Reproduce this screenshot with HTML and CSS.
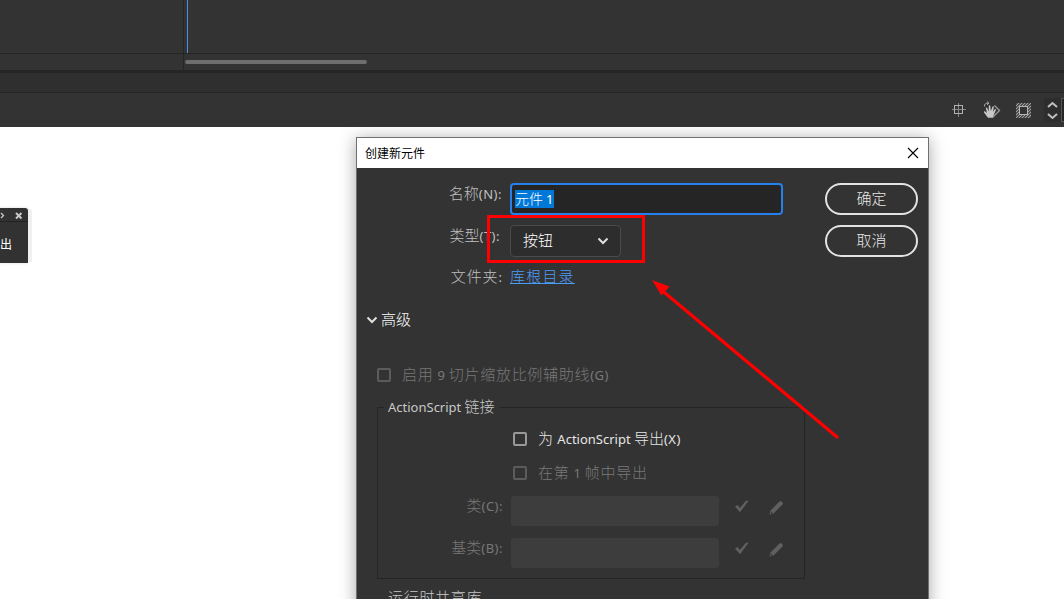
FILE: index.html
```html
<!DOCTYPE html>
<html lang="zh-CN">
<head>
    <meta charset="UTF-8">
    <meta name="viewport" content="width=device-width, initial-scale=1.0">
    <title>创建新元件</title>
    <link rel="stylesheet" href="styles.css">
</head>
<body>
    <div class="timeline">
        <div class="layers"></div>
        <div class="frames"><div class="playhead"></div></div>
    </div>
    <div class="timeline-scroll">
        <div class="layers"></div>
        <div class="track"><div class="thumb"></div></div>
    </div>
    <div class="tabs"></div>
    <div class="toolbar">
        <svg class="tool" width="14" height="14" viewBox="0 0 14 14" fill="none">
            <path d="M6.500 0v14M0 6.500h14" stroke="#858585"/>
            <rect x="2.500" y="2.500" width="8" height="8" stroke="#b0b0b0"/>
        </svg>
        <svg class="tool" width="18" height="18" viewBox="0 0 18 18">
            <path d="M1.500 5.500C1 3 3 2 5.500 2.200M4 .5l2 1.700-2 1.600" fill="none" stroke="#aaa"/>
            <path d="M11.500 4.500l5 5-6 6" fill="none" stroke="#999" stroke-width="1.400"/>
            <path d="M5 16.800L1 11.500c-.6-1 .5-1.700 1.200-1L4 12 2.800 7.300c-.2-1 1-1.200 1.400-.3L5.700 10.500 5.800 5c0-1 1.400-1 1.500 0L7.800 10 9.500 5.800c.3-.9 1.500-.5 1.300.4L9.900 11l1.800-2.700c.5-.8 1.500-.2 1.200.6L10.500 14.500v2.300z" fill="#c8c8c8"/>
        </svg>
        <svg class="tool" width="15" height="15" viewBox="0 0 15 15">
            <defs>
                <pattern id="hatch" width="3" height="3" patternUnits="userSpaceOnUse">
                    <rect width="3" height="3" fill="#505050"/>
                    <path d="M-1 1L1-1M0 3L3 0M2 4L4 2" stroke="#a0a0a0" stroke-width="1"/>
                </pattern>
            </defs>
            <rect width="15" height="15" fill="url(#hatch)"/>
            <rect x="3.500" y="3.500" width="8" height="8" fill="#333" stroke="#b5b5b5"/>
        </svg>
        <div class="stepper">
            <svg width="16" height="24" viewBox="0 0 16 24" fill="none" stroke="#c0c0c0" stroke-width="2">
                <path d="M4 9l4.500-4L13 9M4 16l4.500 4 4.500-4"/>
            </svg>
        </div>
        <div class="zoom-box"></div>
    </div>

    <div class="stage">
        <div class="mini-panel">
            <div class="mini-head">
                <svg width="28" height="13" viewBox="0 0 28 13" fill="none" stroke="#c8c8c8">
                    <path d="M1 5l2.500 2.500L1 10" stroke-width="1.300"/>
                    <path d="M16 5l5.500 5.500M21.500 5L16 10.500" stroke-width="2"/>
                </svg>
            </div>
            <div class="mini-body">导出</div>
        </div>

        <div class="dialog">
            <div class="titlebar">
                <span class="title">创建新元件</span>
                <svg width="12" height="12" viewBox="0 0 12 12" stroke="#000" stroke-width="1.100">
                    <path d="M1 1l10 10M11 1L1 11"/>
                </svg>
            </div>
            <div class="content">
                <div class="top">
                    <div class="form">
                        <label class="label">名称<span class="latin key">(N):</span></label>
                        <div class="name-input"><span class="selected">元件 <span class="latin">1</span></span></div>
                        <label class="label type-label">类型<span class="latin key">(T):</span></label>
                        <div class="select">
                            <span class="value">按钮</span>
                            <svg width="12" height="8" viewBox="0 0 12 8" fill="none" stroke="#e0e0e0" stroke-width="2">
                                <path d="M1.500 1.500L6 6l4.500-4.500"/>
                            </svg>
                        </div>
                        <label class="label folder-label">文件夹<span class="latin">:</span></label>
                        <div class="folder"><a class="link">库根目录</a></div>
                    </div>
                    <div class="buttons">
                        <div class="btn">确定</div>
                        <div class="btn">取消</div>
                    </div>
                </div>

                <div class="advanced">
                    <svg width="12" height="8" viewBox="0 0 12 8" fill="none" stroke="#e0e0e0" stroke-width="2">
                        <path d="M1.500 1.500L6 6l4.500-4.500"/>
                    </svg>
                    <span class="value">高级</span>
                </div>

                <div class="check-row slice disabled">
                    <span class="box"></span>
                    <span class="wide">启用 <span class="latin">9</span> 切片缩放比例辅助线<span class="latin key">(G)</span></span>
                </div>

                <fieldset class="linkage">
                    <legend><span class="latin">ActionScript</span> 链接</legend>
                    <div class="check-row export">
                        <span class="box"></span>
                        <span class="value">为&nbsp;<span class="latin script">ActionScript</span> 导出<span class="latin key">(X)</span></span>
                    </div>
                    <div class="check-row export disabled">
                        <span class="box"></span>
                        <span class="wide">在第 <span class="latin">1</span> 帧中导出</span>
                    </div>
                    <div class="field-row">
                        <label class="label">类<span class="latin key">(C):</span></label>
                        <div class="field"></div>
                        <svg class="tick" width="14" height="13" viewBox="0 0 14 13"><path d="M0 6.500L2.500 5l2.300 3L11 .8h2.600L5 12.300z" fill="#606060"/></svg>
                        <svg class="pencil" width="15" height="15" viewBox="0 0 15 15">
                            <path d="M.5 14.500l1-4L10.500 1.500q1-1 2 0l1 1q1 1 0 2L4.500 13.500z" fill="#606060"/>
                            <path d="M2 11.500l1.800 1.800-1.500.4-.6-.6z" fill="#333"/>
                        </svg>
                    </div>
                    <div class="field-row">
                        <label class="label">基类<span class="latin key">(B):</span></label>
                        <div class="field"></div>
                        <svg class="tick" width="14" height="13" viewBox="0 0 14 13"><path d="M0 6.500L2.500 5l2.300 3L11 .8h2.600L5 12.300z" fill="#606060"/></svg>
                        <svg class="pencil" width="15" height="15" viewBox="0 0 15 15">
                            <path d="M.5 14.500l1-4L10.500 1.500q1-1 2 0l1 1q1 1 0 2L4.500 13.500z" fill="#606060"/>
                            <path d="M2 11.500l1.800 1.800-1.500.4-.6-.6z" fill="#333"/>
                        </svg>
                    </div>
                </fieldset>

                <div class="shared">运行时共享库</div>
            </div>
        </div>
    </div>

    <div class="highlight"></div>
    <svg class="arrow" width="190" height="165" viewBox="0 0 190 165">
        <path d="M14 13L186 157" stroke="#f00" stroke-width="3.200" stroke-linecap="round"/>
        <path d="M1 0l17.500 6.500-8 9z" fill="#f00"/>
    </svg>
</body>
</html>
```
FILE: styles.css
```css
* {
    box-sizing: border-box;
}
body {
    margin: 0;
    width: 1064px;
    height: 599px;
    overflow: hidden;
    position: relative;
    display: flex;
    flex-direction: column;
    background: #fff;
    font-family: "Noto Sans CJK SC", sans-serif;
    font-size: 15px;
    color: #e6e6e6;
}
svg {
    display: block;
    flex: none;
}

/* timeline and toolbar */
.timeline, .timeline-scroll {
    display: flex;
    background: #333;
}
.timeline {
    height: 54px;
    border-bottom: 1px solid #252525;
}
.timeline-scroll {
    height: 16px;
}
.layers {
    width: 184px;
    border-right: 1px solid #252525;
}
.frames {
    padding-left: 3px;
}
.playhead {
    width: 1px;
    height: 53px;
    background: #4a90e2;
}
.track {
    padding: 6px 0 0 1px;
}
.thumb {
    width: 182px;
    height: 4px;
    border-radius: 2px;
    background: #6e6e6e;
}
.tabs {
    height: 23px;
    background: #2f2f2f;
    border-top: 3px solid #252525;
    border-bottom: 1px solid #252525;
}
.toolbar {
    height: 34px;
    display: flex;
    align-items: center;
    justify-content: flex-end;
    background: #333;
}
.tool:nth-child(1) {
    margin-right: 17px;
}
.tool:nth-child(2) {
    margin-right: 15px;
}
.tool:nth-child(3) {
    margin-right: 13px;
}
.stepper {
    width: 17px;
    height: 24px;
    background: #2d2d2d;
}
.zoom-box {
    width: 3px;
    height: 24px;
    border: 1px solid #555;
    border-right: none;
    background: #262626;
}

/* floating panels on the stage */
.stage {
    flex: 1;
    min-height: 0;
    overflow: hidden;
    position: relative;
}
.mini-panel {
    position: absolute;
    left: 0;
    top: 81px;
    width: 28px;
    height: 55px;
    background: #323232;
    border-radius: 0 3px 0 0;
    box-shadow: 5px 0 0 -1px #f0f0f0, 0 0 3px rgba(0, 0, 0, 0.15);
}
.mini-head {
    height: 14px;
    border-bottom: 1px solid #222;
}
.mini-body {
    display: flex;
    justify-content: flex-end;
    overflow: hidden;
    white-space: nowrap;
    width: 12px;
    height: 41px;
    line-height: 44px;
    font-size: 12px;
    color: #fff;
}
.dialog {
    position: absolute;
    left: 356px;
    top: 10px;
    width: 573px;
    height: 520px;
    border: 1px solid #707070;
    background: #333;
    box-shadow: 0 2px 16px rgba(0, 0, 0, 0.35);
}
.titlebar {
    height: 30px;
    padding: 0 9px 0 8px;
    display: flex;
    align-items: center;
    justify-content: space-between;
    background: #fff;
    color: #000;
    font-size: 12px;
}
.title {
    padding-bottom: 2px;
}
.content {
    font-weight: 300;
    white-space: nowrap;
}
.latin {
    font-family: "Noto Sans", sans-serif;
    font-size: 13px;
    font-weight: 400;
    letter-spacing: 0;
}
.key {
    letter-spacing: 0.5px;
}
.script {
    margin-left: 1px;
}
.value, .wide {
    padding-bottom: 3px;
}
.top {
    display: flex;
    justify-content: space-between;
    padding: 15px 10px 0 0;
}
.form {
    display: grid;
    grid-template-columns: 145px 273px;
    grid-template-rows: 32px 32px 22px;
    row-gap: 10px;
    column-gap: 8px;
}
.label {
    height: 20px;
    line-height: 20px;
    text-align: right;
    color: #c0c0c0;
}
.type-label {
    padding-right: 2px;
}
.folder-label {
    line-height: 18px;
    letter-spacing: 0.9px;
}
.name-input {
    display: flex;
    align-items: center;
    height: 32px;
    padding: 0 0 1px 3px;
    border: 2px solid #2680eb;
    border-radius: 4px;
    background: #252525;
}
.selected {
    height: 18px;
    line-height: 17px;
    background: #0078d7;
    color: #fff;
    font-size: 14px;
}
.select {
    width: 111px;
    height: 32px;
    display: flex;
    align-items: center;
    justify-content: space-between;
    padding: 0 11px 0 12px;
    border: 1px solid #4a4a4a;
    border-radius: 4px;
    background: #2d2d2d;
    color: #fff;
}
.folder {
    line-height: 18px;
}
.link {
    color: #4b9cf5;
    letter-spacing: 1.2px;
    text-decoration: underline;
}
.buttons {
    display: flex;
    flex-direction: column;
    gap: 10px;
}
.btn {
    width: 93px;
    height: 32px;
    line-height: 25px;
    border: 2px solid #e3e3e3;
    border-radius: 16px;
    text-align: center;
}
.advanced {
    display: flex;
    align-items: center;
    gap: 3px;
    height: 22px;
    margin-top: 20px;
    padding-left: 9px;
    color: #fff;
}
.check-row {
    display: flex;
    align-items: center;
    gap: 11px;
    height: 22px;
}
.box {
    width: 14px;
    height: 14px;
    border: 2px solid #999;
    border-radius: 2px;
}
.disabled {
    color: #787878;
}
.disabled .box {
    border-color: #5c5c5c;
}
.wide {
    letter-spacing: 0.7px;
}
.slice {
    margin-top: 33px;
    padding-left: 20px;
}

/* ActionScript linkage group */
.linkage {
    width: 428px;
    height: 183px;
    margin: 10px 0 0 20px;
    padding: 10px 0 0;
    border: 1px solid #252525;
}
.linkage legend {
    height: 22px;
    line-height: 20px;
    margin-left: 6px;
    padding: 0 5px 0 4px;
    color: #c8c8c8;
}
.export {
    padding-left: 135px;
    height: 22px;
    margin-bottom: 12px;
}
.field-row {
    display: flex;
    margin-bottom: 12px;
}
.field-row .label {
    width: 125px;
    line-height: 18px;
    margin-right: 8px;
    color: #787878;
}
.field {
    width: 208px;
    height: 30px;
    border-radius: 3px;
    background: #3d3d3d;
}
.tick {
    margin: 4px 0 0 16px;
}
.pencil {
    margin: 4px 0 0 20px;
}
.shared {
    margin: 8px 0 0 31px;
    line-height: 20px;
    letter-spacing: 0.7px;
    color: #c8c8c8;
}

/* annotation */
.highlight {
    position: absolute;
    left: 487px;
    top: 215px;
    width: 158px;
    height: 48px;
    border: 3px solid #f00;
}
.arrow {
    position: absolute;
    left: 651px;
    top: 280px;
}
```
